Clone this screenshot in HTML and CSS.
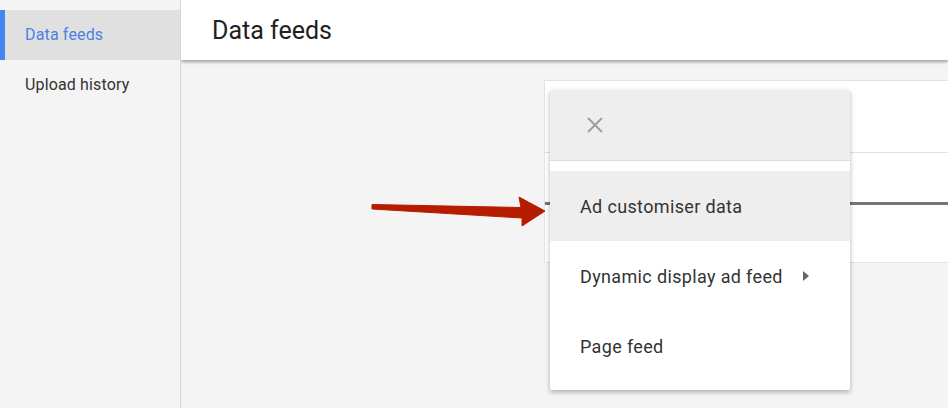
FILE: index.html
```html
<!DOCTYPE html>
<html lang="en">
<head>
  <meta charset="UTF-8">
  <title>Data feeds</title>
  <link rel="stylesheet" href="styles.css">
</head>
<body>

  <!-- Side navigation -->
  <nav class="sidebar">
    <a class="nav-item active" href="#">Data feeds</a>
    <a class="nav-item" href="#">Upload history</a>
  </nav>

  <div class="main">
    <header class="page-header">
      <h1>Data feeds</h1>
    </header>

    <div class="content">
      <div class="card">
        <div class="card-top"></div>
        <div class="card-body">
          <div class="progress"></div>
        </div>
      </div>
    </div>
  </div>

  <!-- Create feed menu -->
  <div class="menu">
    <div class="menu-head">
      <svg class="close-icon" width="16" height="16" viewBox="0 0 16 16">
        <path d="M1 1 L15 15 M15 1 L1 15" stroke="#9e9e9e" stroke-width="2" fill="none"/>
      </svg>
    </div>
    <ul class="menu-list">
      <li class="menu-item hover">Ad customiser data</li>
      <li class="menu-item">Dynamic display ad feed <span class="caret"></span></li>
      <li class="menu-item">Page feed</li>
    </ul>
  </div>

  <!-- Annotation arrow -->
  <svg class="arrow" width="180" height="34" viewBox="370 195 180 34">
    <polygon points="372,204.5 521,207.5 519,197 545,211 522,226 522,218 372,209" fill="#b51c00" stroke="#b51c00" stroke-width="1" stroke-linejoin="round"/>
  </svg>

</body>
</html>
```

FILE: styles.css
```css
body {
  margin: 0;
  padding: 0;
  font-family: Roboto, "Liberation Sans", sans-serif;
  background-color: #f4f4f4;
  color: #333;
  display: flex;
  height: 408px;
  overflow: hidden;
}

.sidebar {
  width: 180px;
  flex-shrink: 0;
  padding-top: 10px;
  border-right: 1px solid #d6d6d6;
  background-color: #f4f4f4;
}

.nav-item {
  display: block;
  height: 50px;
  line-height: 50px;
  padding-left: 25px;
  font-size: 16px;
  letter-spacing: 0.15px;
  color: #333;
  text-decoration: none;
}

.nav-item.active {
  background-color: #e0e0e0;
  color: #4a80e6;
  box-shadow: inset 5px 0 0 #4285f4;
}

.main {
  flex: 1;
  display: flex;
  flex-direction: column;
  overflow: hidden;
}

.page-header {
  height: 60px;
  background: #fff;
  box-shadow: 0 2px 3px rgba(0, 0, 0, 0.35);
  position: relative;
  z-index: 1;
  display: flex;
  align-items: center;
  padding-left: 31px;
}

.page-header h1 {
  margin: 0;
  font-size: 25px;
  font-weight: 400;
  color: #212121;
}

.content {
  padding: 20px 0 0 363px;
}

.card {
  width: 520px;
  height: 181px;
  background: #fff;
  border: 1px solid #e2e2e2;
}

.card-top {
  height: 71px;
  border-bottom: 1px solid #e2e2e2;
}

.card-body {
  padding-top: 49px;
}

.progress {
  height: 3px;
  background: #757575;
}

/* Menu */
.menu {
  position: absolute;
  left: 550px;
  top: 90px;
  width: 300px;
  height: 300px;
  background: #fff;
  border-radius: 2px;
  box-shadow: 0 2px 5px rgba(0, 0, 0, 0.3);
  z-index: 5;
  overflow: hidden;
}

.menu-head {
  height: 70px;
  background: #eee;
  border-bottom: 1px solid #dcdcdc;
  display: flex;
  align-items: center;
  padding-left: 37px;
}

.menu-list {
  list-style: none;
  margin: 0;
  padding: 10px 0 0;
}

.menu-item {
  height: 70px;
  display: flex;
  align-items: center;
  padding-left: 30px;
  font-size: 18px;
  letter-spacing: 0.35px;
  color: #333;
}

.menu-item.hover {
  background: #eee;
}

.caret {
  width: 0;
  height: 0;
  margin-left: 20px;
  border-top: 5px solid transparent;
  border-bottom: 5px solid transparent;
  border-left: 6px solid #666;
}

.arrow {
  position: absolute;
  left: 370px;
  top: 195px;
  z-index: 6;
}
```
